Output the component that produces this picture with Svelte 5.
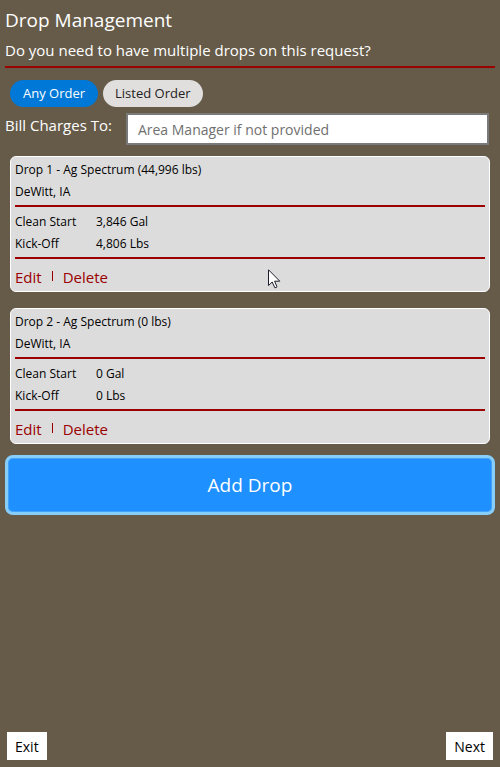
<script>
  const orders = ['Any Order', 'Listed Order'];
  let order = $state('Any Order');
  let billTo = $state('');

  const drops = [
    {
      title: 'Drop 1 - Ag Spectrum (44,996 lbs)',
      place: 'DeWitt, IA',
      products: [
        { name: 'Clean Start', amount: '3,846 Gal' },
        { name: 'Kick-Off', amount: '4,806 Lbs' }
      ]
    },
    {
      title: 'Drop 2 - Ag Spectrum (0 lbs)',
      place: 'DeWitt, IA',
      products: [
        { name: 'Clean Start', amount: '0 Gal' },
        { name: 'Kick-Off', amount: '0 Lbs' }
      ]
    }
  ];
</script>

<div class="page">
  <header>
    <h1>Drop Management</h1>
    <p>Do you need to have multiple drops on this request?</p>
  </header>

  <main>
    <div class="pills">
      {#each orders as name}
        <button
          type="button"
          class="pill"
          class:selected={order === name}
          aria-pressed={order === name}
          onclick={() => (order = name)}>{name}</button>
      {/each}
    </div>

    <div class="field">
      <label for="bill-to">Bill Charges To:</label>
      <input id="bill-to" type="text" placeholder="Area Manager if not provided" bind:value={billTo} />
    </div>

    <div class="drops">
      {#each drops as drop}
        <article class="card">
          <div class="row">{drop.title}</div>
          <div class="row">{drop.place}</div>
          <hr />
          <table>
            <tbody>
              {#each drop.products as product}
                <tr>
                  <th scope="row">{product.name}</th>
                  <td>{product.amount}</td>
                </tr>
              {/each}
            </tbody>
          </table>
          <hr />
          <div class="actions">
            <a href="#edit">Edit</a>
            <span class="divider"></span>
            <a href="#delete">Delete</a>
          </div>
        </article>
      {/each}
    </div>

    <button type="button" class="add">Add Drop</button>
  </main>

  <footer>
    <button type="button">Exit</button>
    <button type="button">Next</button>
  </footer>

  <svg class="pointer" width="13" height="21" viewBox="0 0 13 21" aria-hidden="true">
    <path
      d="M0.5 0.8V16.5L4.2 13L6.8 18.7Q8.2 19 9 17.8L6.6 12.2H11.8Z"
      fill="#fff"
      stroke="#1c1c2b"
      stroke-width="1"
      stroke-linejoin="round" />
  </svg>
</div>

<style>
  :global(body) {
    margin: 0;
    background: #665b49;
  }

  .page {
    position: relative;
    box-sizing: border-box;
    display: flex;
    flex-direction: column;
    min-height: 100vh;
    padding: 4px 5px 7px;
    background: #665b49;
    color: #fff;
    font-family: 'Segoe UI', 'Open Sans', 'Noto Sans', sans-serif;
    font-size: 15px;
  }

  button,
  input {
    margin: 0;
    font-family: inherit;
  }

  header {
    padding-bottom: 2px;
    border-bottom: 2px solid #9b0000;
  }

  h1,
  p {
    margin: 0;
    font-weight: 400;
  }

  h1 {
    font-size: 19px;
    line-height: 32px;
  }

  p {
    line-height: 28px;
  }

  main {
    flex: 1;
  }

  .pills {
    display: flex;
    gap: 5px;
    padding: 12px 5px 6px;
  }

  .pill {
    min-width: 88px;
    height: 27px;
    padding: 0 12px;
    border: 0;
    border-radius: 14px;
    background: #e1dfdd;
    color: #222;
    font-size: 13px;
    line-height: 27px;
  }

  .pill.selected {
    background: #0078d7;
    color: #fff;
  }

  .field {
    display: flex;
    gap: 14px;
    padding-right: 6px;
  }

  label {
    flex: none;
    line-height: 24px;
  }

  input {
    box-sizing: border-box;
    flex: 1;
    min-width: 0;
    height: 32px;
    padding: 0 10px;
    border: 2px solid #7a7a7a;
    border-radius: 0;
    background: #fff;
    color: #222;
    font-size: 14px;
  }

  input::placeholder {
    color: #707070;
    opacity: 1;
  }

  .drops {
    display: flex;
    flex-direction: column;
    gap: 16px;
    padding: 11px 5px;
  }

  .card {
    padding: 2px 4px 0;
    border: 1px solid #fff;
    border-radius: 6px;
    background: #dcdcdc;
    color: #000;
    font-size: 12px;
    line-height: 22px;
  }

  hr {
    height: 2px;
    margin: 2px 0 4px;
    border: 0;
    background: #9b0000;
  }

  table {
    border-collapse: collapse;
  }

  th,
  td {
    padding: 0;
    font-weight: 400;
    text-align: left;
  }

  th {
    width: 81px;
  }

  .actions {
    display: flex;
    align-items: center;
    gap: 10px;
    height: 28px;
    font-size: 15px;
  }

  .actions a {
    color: #9b0000;
    text-decoration: none;
  }

  .divider {
    width: 1px;
    height: 10px;
    margin-bottom: 2px;
    background: #9b0000;
  }

  .add {
    display: block;
    width: 100%;
    height: 60px;
    border: 3px solid #87cefa;
    border-radius: 8px;
    background: #1e90ff;
    box-shadow: inset 0 0 0 1px #46a2f8;
    color: #fff;
    font-size: 19px;
  }

  footer {
    display: flex;
    justify-content: space-between;
    padding: 0 2px;
  }

  footer button {
    height: 28px;
    padding: 0 8px;
    border: 0;
    background: #fff;
    color: #000;
    font-size: 14px;
  }

  .pointer {
    position: absolute;
    top: 269px;
    left: 268px;
    pointer-events: none;
  }
</style>
